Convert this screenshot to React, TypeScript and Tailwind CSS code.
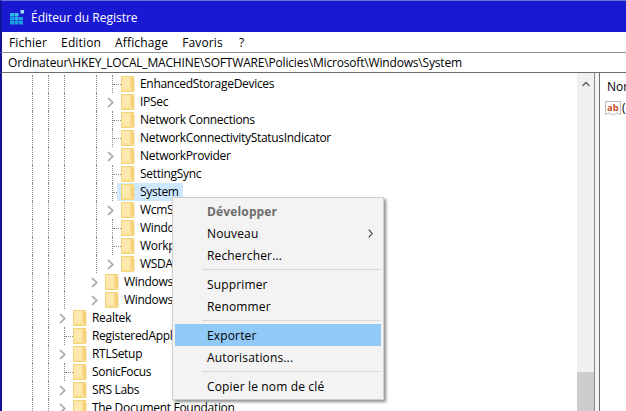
import { ChevronUp } from "lucide-react";

type Row = {
  name: string;
  guides: number[];
  kind: "arrow" | "dots";
  left: string;
  selected?: boolean;
};

const font = "font-['Open_Sans','Noto_Sans',sans-serif]";

const deep = [32, 48, 64, 96];
const mid = [32, 48, 64];
const top = [32, 48];

const rows: Row[] = [
  { name: "EnhancedStorageDevices", guides: deep, kind: "dots", left: "w-[112px]" },
  { name: "IPSec", guides: deep, kind: "arrow", left: "w-[112px]" },
  { name: "Network Connections", guides: deep, kind: "dots", left: "w-[112px]" },
  { name: "NetworkConnectivityStatusIndicator", guides: deep, kind: "dots", left: "w-[112px]" },
  { name: "NetworkProvider", guides: deep, kind: "arrow", left: "w-[112px]" },
  { name: "SettingSync", guides: deep, kind: "dots", left: "w-[112px]" },
  { name: "System", guides: deep, kind: "dots", left: "w-[112px]", selected: true },
  { name: "WcmSvc", guides: deep, kind: "arrow", left: "w-[112px]" },
  { name: "WindowsUpdate", guides: deep, kind: "dots", left: "w-[112px]" },
  { name: "Workplace", guides: deep, kind: "dots", left: "w-[112px]" },
  { name: "WSDAPI", guides: deep, kind: "arrow", left: "w-[112px]" },
  { name: "Windows Defender", guides: mid, kind: "arrow", left: "w-[96px]" },
  { name: "Windows NT", guides: mid, kind: "arrow", left: "w-[96px]" },
  { name: "Realtek", guides: top, kind: "arrow", left: "w-[64px]" },
  { name: "RegisteredApplications", guides: top, kind: "dots", left: "w-[64px]" },
  { name: "RTLSetup", guides: top, kind: "arrow", left: "w-[64px]" },
  { name: "SonicFocus", guides: top, kind: "dots", left: "w-[64px]" },
  { name: "SRS Labs", guides: top, kind: "arrow", left: "w-[64px]" },
  { name: "The Document Foundation", guides: top, kind: "arrow", left: "w-[64px]" },
];

function Folder() {
  return (
    <svg width="14" height="16" viewBox="0 0 14 16" className="shrink-0">
      <path d="M0.5 0.5H12.5V15.5H0.5Z" fill="#fbe397" stroke="#f3d27a" />
      <path d="M9.5 1V12.5L13.5 15.5V3Z" fill="#f6d27c" />
      <path d="M1 1H9V13H1Z" fill="#fde9ad" />
    </svg>
  );
}

function Arrow() {
  return (
    <svg width="7" height="11" viewBox="0 0 7 11" fill="none" className="-ml-[5px] shrink-0">
      <path d="M1 1L5.7 5.5L1 10" stroke="#a6a6a6" strokeWidth="1.7" />
    </svg>
  );
}

function TreeRow({ row }: { row: Row }) {
  return (
    <div className="flex h-[18px] shrink-0 items-center whitespace-nowrap">
      <div className={`relative h-full shrink-0 ${row.left}`}>
        {row.guides.map((x) => (
          <span
            key={x}
            className="absolute top-0 h-full border-l border-dotted border-[#8c8c8c]"
            style={{ left: x }}
          />
        ))}
      </div>
      <div className="flex h-full w-[9px] shrink-0 items-center">
        {row.kind === "dots" ? (
          <>
            <span className="h-full border-l border-dotted border-[#8c8c8c]" />
            <span className="w-2 border-t border-dotted border-[#8c8c8c]" />
          </>
        ) : (
          <Arrow />
        )}
      </div>
      <div
        className={`-ml-[4px] flex h-full items-center pl-[4px] pr-[4px] ${
          row.selected ? "bg-[#cde8ff]" : ""
        }`}
      >
        <Folder />
        <span className="ml-[5px] text-[12px] tracking-[-0.3px] text-black">{row.name}</span>
      </div>
    </div>
  );
}

function MenuItem({ label, bold, active, arrow }: { label: string; bold?: boolean; active?: boolean; arrow?: boolean }) {
  return (
    <div
      className={`flex h-[22px] items-center justify-between pl-[32px] pr-[8px] pt-px text-[12px] tracking-[0.15px] ${
        active ? "bg-[#91c9f7]" : ""
      } ${bold ? "font-bold text-[#6d6d6d]" : "text-black"}`}
    >
      <span>{label}</span>
      {arrow && (
        <svg width="5" height="9" viewBox="0 0 5 9" fill="none">
          <path d="M0.7 0.7L4.2 4.5L0.7 8.3" stroke="#333" strokeWidth="1.1" />
        </svg>
      )}
    </div>
  );
}

function MenuSep() {
  return (
    <div className="flex h-[7px] items-center pl-[27px]">
      <div className="h-px w-full bg-[#d7d7d7]" />
    </div>
  );
}

export default function App() {
  return (
    <div className={`flex h-[411px] w-[626px] flex-col overflow-hidden bg-white ${font}`}>
      <div className="flex h-[32px] shrink-0 items-center border-t border-[#6e6ed8] border-l-2 border-l-[#12129a] bg-[#1919d2] pl-[8px]">
        <svg width="15" height="15" viewBox="0 0 15 15" className="mt-[2px] shrink-0">
          <rect x="0" y="3" width="4" height="3.5" fill="#2bb6e8" />
          <rect x="4.5" y="3" width="4" height="3.5" fill="#36c6f0" />
          <rect x="0" y="7" width="4" height="3.5" fill="#1c9fdc" />
          <rect x="4.5" y="7" width="4" height="3.5" fill="#2bb6e8" />
          <rect x="9" y="7" width="4" height="3.5" fill="#1c9fdc" />
          <rect x="0" y="11" width="4" height="3.5" fill="#1c9fdc" />
          <rect x="4.5" y="11" width="4" height="3.5" fill="#1c9fdc" />
          <rect x="9" y="11" width="4" height="3.5" fill="#1c9fdc" />
          <rect x="10.5" y="0" width="3.5" height="3.5" fill="#9fdcf5" />
        </svg>
        <span className="ml-[6px] pt-[2px] text-[12px] text-white">Éditeur du Registre</span>
      </div>
      <div className="flex h-[20px] shrink-0 items-center gap-[14px] border-l-2 border-l-[#12129a] pl-[7px] pt-px text-[12px] tracking-[0.15px] text-black">
        <span>Fichier</span>
        <span>Edition</span>
        <span>Affichage</span>
        <span>Favoris</span>
        <span className="ml-[2px]">?</span>
      </div>
      <div className="flex h-[21px] shrink-0 items-center border-y border-t-[#8f8f8f] border-b-[#6f6f6f] border-l-2 border-l-[#12129a] pl-[6px] text-[12px] tracking-[-0.18px] text-black">
        Ordinateur\HKEY_LOCAL_MACHINE\SOFTWARE\Policies\Microsoft\Windows\System
      </div>
      <div className="relative flex min-h-0 flex-1 border-l-2 border-l-[#12129a]">
        <div className="-ml-[2px] flex min-w-0 flex-1 flex-col overflow-hidden pt-[2px]">
          {rows.map((r) => (
            <TreeRow key={r.name} row={r} />
          ))}
        </div>
        <div className="flex w-[17px] shrink-0 flex-col bg-[#f0f0f0]">
          <div className="flex h-[22px] items-center justify-center">
            <ChevronUp size={12} strokeWidth={3} className="text-[#606060]" />
          </div>
          <div className="flex-1" />
          <div className="h-[39px] bg-[#cdcdcd]" />
        </div>
        <div className="w-[6px] shrink-0 border-x border-l-[#8a8a8a] border-r-[#6f6f6f] bg-[#f4f4f4]" />
        <div className="w-[26px] shrink-0 overflow-hidden pt-[5px] text-[12px] text-black">
          <div className="h-[21px] overflow-hidden whitespace-nowrap pl-[7px]">Nom</div>
          <div className="flex items-center pl-[5px]">
            <svg width="17" height="16" viewBox="0 0 17 16" className="shrink-0">
              <path d="M0.5 1.5H15.5V14.5L12 13L8 15L4 13L0.5 14.5Z" fill="#fff" stroke="#b9b9b9" />
              <text x="2" y="10.5" fontSize="9.5" fontWeight="700" fill="#c4502a">ab</text>
            </svg>
            <span>(</span>
          </div>
        </div>
      </div>
      <div className="absolute left-[172px] top-[197px] w-[212px] border border-[#cfcfcf] bg-[#f3f3f3] p-[2px] shadow-[2px_2px_3px_rgba(0,0,0,0.45)]">
        <MenuItem label="Développer" bold />
        <MenuItem label="Nouveau" arrow />
        <MenuItem label="Rechercher..." />
        <MenuSep />
        <MenuItem label="Supprimer" />
        <MenuItem label="Renommer" />
        <MenuSep />
        <MenuItem label="Exporter" active />
        <MenuItem label="Autorisations..." />
        <MenuSep />
        <MenuItem label="Copier le nom de clé" />
      </div>
    </div>
  );
}
